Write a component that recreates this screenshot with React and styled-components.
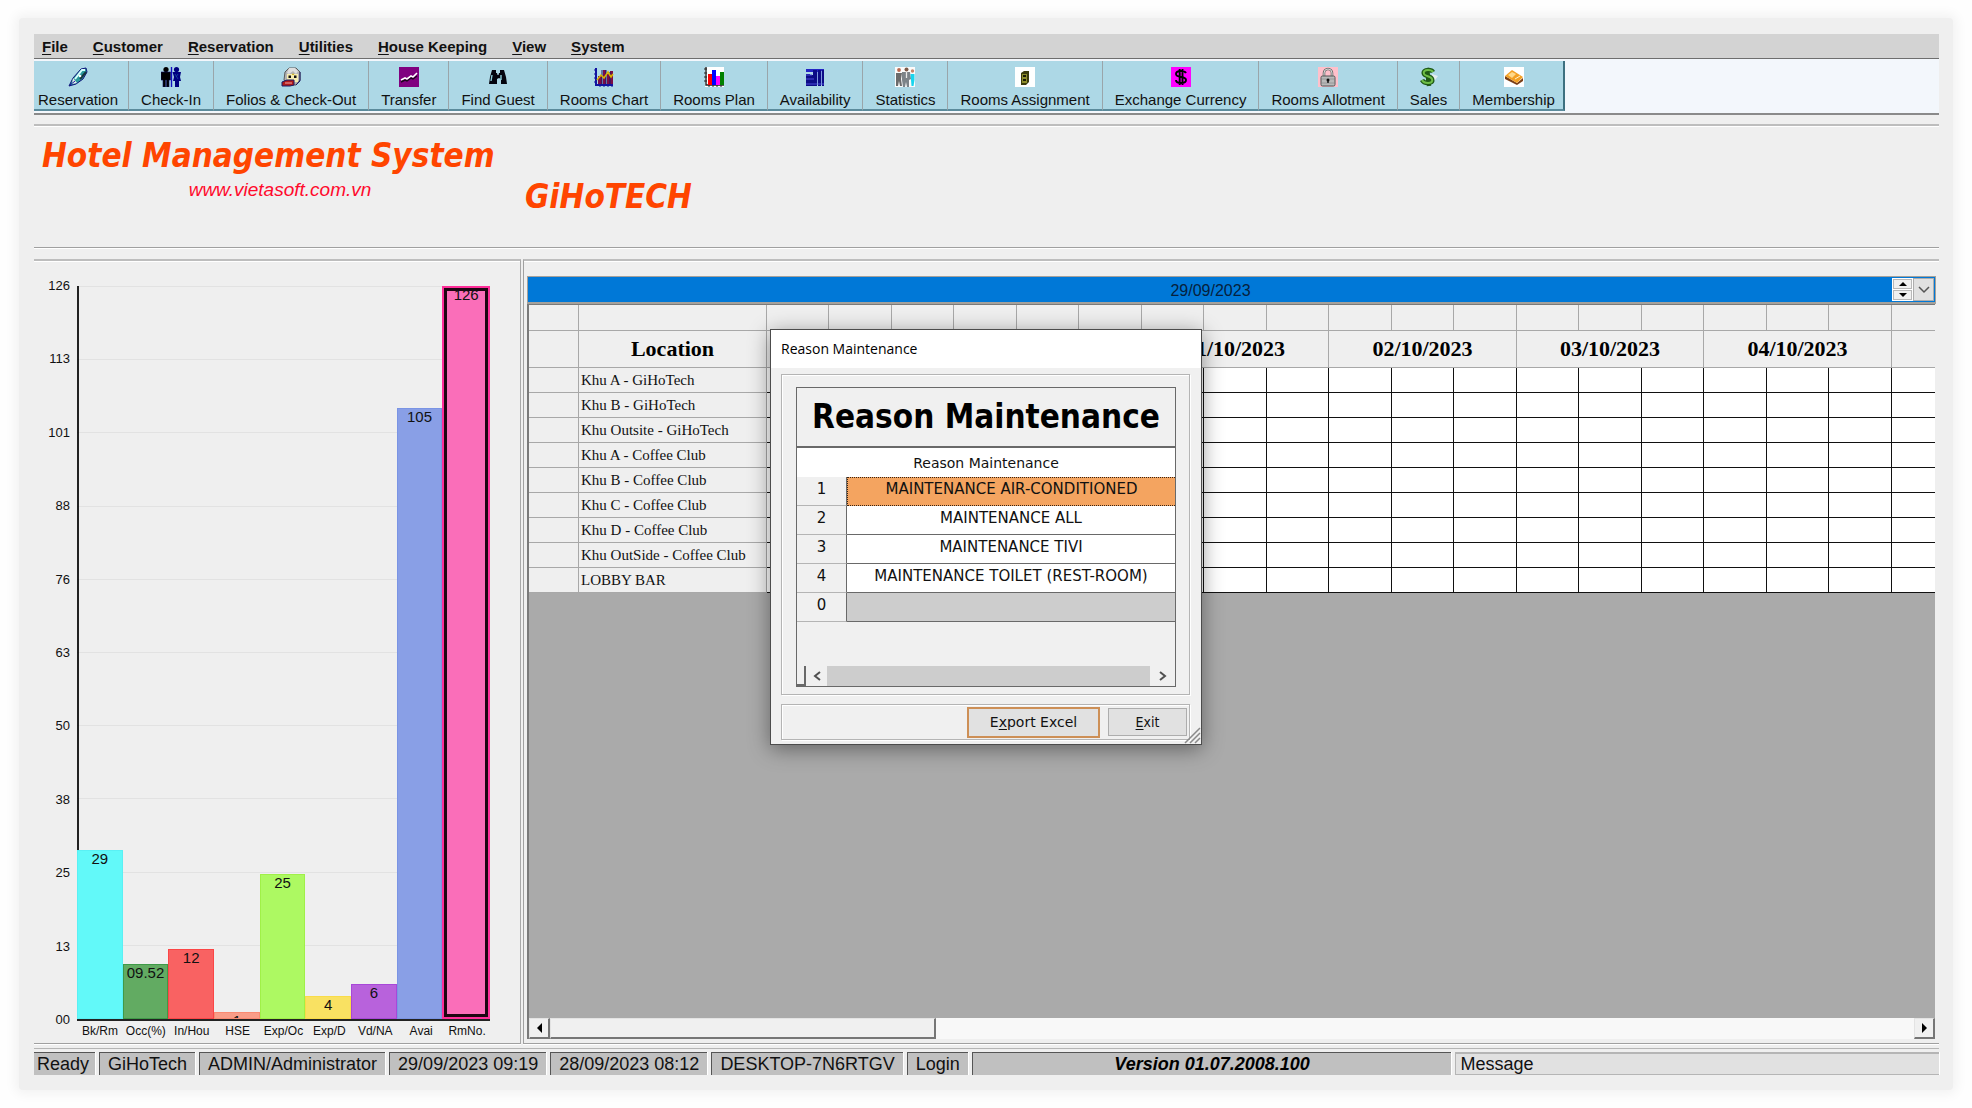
import React from "react";
import styled, { createGlobalStyle, css } from "styled-components";

const SANS = `"Liberation Sans", Arial, sans-serif`;
const SERIF = `"Liberation Serif", "Times New Roman", serif`;
const TAHOMA = `"DejaVu Sans Condensed", "DejaVu Sans", Tahoma, sans-serif`;
const WIDE = `"DejaVu Sans", Verdana, sans-serif`;

const GlobalStyle = createGlobalStyle`
  *, *::before, *::after { box-sizing: border-box; }
  body { margin: 0; background: #fefefe; font-family: ${SANS}; color: #111; }
  button, input { font: inherit; color: inherit; margin: 0; padding: 0; border: 0; border-radius: 0; }
  u { text-underline-offset: 2px; }
`;

const Page = styled.div`
  height: 100vh;
  min-height: 800px;
  padding: 18px 19px;
  display: flex;
`;

const Surface = styled.div`
  position: relative;
  flex: 1;
  min-width: 0;
  display: flex;
  flex-direction: column;
  padding: 16px 14px 15px 15px;
  background: #efefef;
  border-radius: 4px;
  box-shadow: 0 0 12px 4px rgba(0, 0, 0, 0.05);
`;

/* ---------- menu and toolbar ---------- */

const MenuBar = styled.nav`
  display: flex;
  gap: 25px;
  height: 25px;
  padding: 0 8px;
  background: #d3d3d3;
  border-bottom: 1px solid #6e6e6e;
`;

const MenuItem = styled.button`
  background: none;
  font-weight: bold;
  font-size: 15px;
  line-height: 26px;
`;

const ToolBar = styled.div`
  display: flex;
  height: 56px;
  padding: 2px 0;
  background: #f3f7fc;
  border-bottom: 2px solid #8a8a8a;
  flex-shrink: 0;
`;

const ToolButton = styled.button`
  display: flex;
  flex-direction: column;
  align-items: center;
  gap: 4px;
  padding: 6px 12px 0 12px;
  background: #add8e6;
  border-right: 1px solid #9aa5aa;
  border-bottom: 2px solid #5b8b9c;
  font-size: 15px;
  line-height: 17px;
  white-space: nowrap;
  &:first-child { padding-left: 4px; padding-right: 10px; }
  &:last-child { padding-right: 8px; border-right: 2px solid #3d7080; }
`;

const Glyph = styled.svg`
  width: 20px;
  height: 20px;
  display: block;
`;

/* ---------- banner ---------- */

const Banner = styled.header`
  display: flex;
  flex-shrink: 0;
  height: 124px;
  margin-top: 9px;
  padding-left: 8px;
  border-top: 2px solid #bdbdbd;
  border-bottom: 1px solid #a0a0a0;
  box-shadow: inset 0 1px 0 #fff, 0 1px 0 #fff;
`;

const brandFont = css`
  margin: 0;
  font-family: ${TAHOMA};
  font-weight: bold;
  font-style: italic;
  font-size: 33px;
  line-height: 40px;
  color: #ff4500;
`;

const BrandBlock = styled.div`
  display: flex;
  flex-direction: column;
  align-items: center;
  width: 476px;
  padding-top: 10px;
`;

const Brand = styled.h1`
  ${brandFont}
  align-self: flex-start;
  white-space: nowrap;
`;

const SiteLink = styled.a`
  font-size: 19px;
  line-height: 28px;
  font-style: italic;
  color: #ff0a2c;
  text-decoration: none;
`;

const HotelName = styled.h2`
  ${brandFont}
  padding: 51px 0 0 7px;
`;

/* ---------- work area ---------- */

const Workspace = styled.main`
  flex: 1;
  min-height: 0;
  display: flex;
  gap: 2px;
  margin-top: 11px;
`;

const panelEdge = css`
  border-top: 2px solid #bdbdbd;
  border-bottom: 1px solid #a0a0a0;
  box-shadow: inset 0 1px 0 #fff, 0 1px 0 #fff;
`;

const ChartPanel = styled.section`
  ${panelEdge}
  border-right: 1px solid #a8a8a8;
  width: 487px;
  flex-shrink: 0;
  display: flex;
  padding: 25px 30px 4px 9px;
`;

const YAxis = styled.div`
  display: flex;
  flex-direction: column;
  justify-content: space-between;
  width: 27px;
  margin: -8px 7px 11px 0;
  font-size: 13px;
  line-height: 16px;
  text-align: right;
`;

const ChartBody = styled.div`
  flex: 1;
  display: flex;
  flex-direction: column;
`;

const Plot = styled.div`
  position: relative;
  flex: 1;
  min-height: 0;
  display: flex;
  align-items: flex-end;
  border-bottom: 2px solid #222;
  box-shadow: inset 2px 0 0 #222;
`;

const GridLines = styled.div`
  position: absolute;
  inset: 0;
  display: flex;
  flex-direction: column;
  justify-content: space-between;
  span { height: 1px; background: rgba(0, 0, 0, 0.05); }
`;

const Bar = styled.div`
  position: relative;
  flex: 1;
  overflow: hidden;
  background: ${(p) => p.$fill};
  border: 1px solid ${(p) => p.$edge};
  font-size: 15px;
  line-height: 16px;
  text-align: center;
  white-space: nowrap;
  ${(p) =>
    p.$selected &&
    css`
      border-width: 2px;
      box-shadow: inset 0 0 0 3px #1d0612;
      line-height: 14px;
    `}
`;

const XAxis = styled.div`
  display: flex;
  padding-top: 3px;
  font-size: 12px;
  line-height: 15px;
  span { flex: 1 1 0; min-width: 0; text-align: center; white-space: nowrap; }
`;

const PlanPanel = styled.section`
  ${panelEdge}
  border-left: 1px solid #a0a0a0;
  flex: 1;
  min-width: 0;
  display: flex;
  flex-direction: column;
  padding: 15px 3px 4px 3px;
`;

const DateBar = styled.div`
  display: flex;
  height: 28px;
  padding: 1px;
  background: #0078d7;
  border: 1px solid #a5a19b;
  border-bottom-width: 2px;
  flex-shrink: 0;
`;

const DateField = styled.input`
  flex: 1;
  min-width: 0;
  padding-top: 2px;
  background: transparent;
  text-align: center;
  font-size: 16px;
  color: #06213d;
`;

const Spinner = styled.div`
  display: flex;
  flex-direction: column;
  gap: 1px;
  width: 21px;
  padding: 1px;
  background: #fff;
`;

const SpinButton = styled.button`
  flex: 1;
  display: grid;
  place-items: center;
  background: #f0f0f0;
  border: 1px solid #b8b8b8;
  svg { display: block; }
`;

const DropButton = styled.button`
  width: 21px;
  display: grid;
  place-items: center;
  background: #e1e1e1;
  border: 1px solid #adadad;
`;

const GridFrame = styled.div`
  flex: 1;
  min-height: 0;
  display: flex;
  flex-direction: column;
  margin-right: 1px;
  border-left: 2px solid #7a7a7a;
  border-top: 1px solid #7a7a7a;
`;

const GridView = styled.div`
  flex: 1;
  min-height: 0;
  overflow: hidden;
  background: #aaa;
`;

const PlanTable = styled.table`
  table-layout: fixed;
  width: 1550px;
  border-spacing: 0;
  font-family: ${SERIF};
  td, th { padding: 0; border-right: 1px solid #a8a8a8; border-bottom: 1px solid #a8a8a8; background: #efefef; }
`;

const SlotRow = styled.tr`
  height: 26px;
`;

const DayRow = styled.tr`
  height: 37px;
  th { font-size: 22px; line-height: 24px; font-weight: bold; color: #000; }
`;

const RoomRow = styled.tr`
  height: 25px;
  th { padding-left: 2px; text-align: left; font-weight: normal; font-size: 15px; line-height: 20px; white-space: nowrap; }
  td.slot { background: #fff; border-color: #111; }
`;

const HScroll = styled.div`
  display: flex;
  height: ${(p) => (p.$flat ? 20 : 21)}px;
  flex-shrink: 0;
  background: #f8f8f8;
`;

const raised = css`
  background: #f0f0f0;
  border: 1px solid #e3e3e3;
  border-right: 2px solid #767676;
  border-bottom: 2px solid #767676;
`;

const RaisedArrow = styled.button`
  ${raised}
  width: 21px;
  display: grid;
  place-items: center;
`;

const RaisedThumb = styled.div`
  ${raised}
  width: 386px;
  margin-right: auto;
`;

/* ---------- status bar ---------- */

const StatusBar = styled.footer`
  display: flex;
  gap: 4px;
  flex-shrink: 0;
  height: 27px;
  margin-top: 4px;
  padding-top: 3px;
  border-top: 1px solid #b5b5b5;
  font-size: 18px;
  line-height: 22px;
  white-space: nowrap;
`;

const StatusCell = styled.span`
  padding: 0 8px;
  background: #c0c0c0;
  border-top: 1px solid #555;
  border-left: 1px solid #555;
  box-shadow: 1px 0 0 #fff;
  &:first-child { padding: 0 6px 0 3px; border-left: 0; }
`;

const VersionCell = styled(StatusCell)`
  flex: 1 1 0;
  padding: 0;
  text-align: center;
  font-weight: bold;
  font-style: italic;
  color: #000;
`;

const MessageCell = styled(StatusCell)`
  flex: 1 1 0;
  padding: 0 0 0 4px;
  background: #e1e1e1;
  border: 1px solid #b5b5b5;
  border-top: 2px solid #b5b5b5;
  border-right: 0;
  line-height: 20px;
`;

/* ---------- dialog ---------- */

const Dialog = styled.div`
  position: absolute;
  top: 311px;
  left: calc(50% - 216px);
  width: 432px;
  display: flex;
  flex-direction: column;
  background: #f0f0f0;
  border: 1px solid #4c4c4c;
  box-shadow: 0 4px 20px rgba(0, 0, 0, 0.42);
  font-family: ${WIDE};
`;

const DialogTitle = styled.div`
  height: 38px;
  padding-left: 10px;
  background: #fff;
  font-family: "Open Sans", "Noto Sans", sans-serif;
  font-size: 14px;
  line-height: 37px;
  color: #000;
`;

const GroupBox = styled.div`
  margin: 6px 11px 0 10px;
  padding: 12px 13px 7px 14px;
  border: 1px solid #b4b4b4;
  box-shadow: inset 1px 1px 0 #fff, 1px 1px 0 #fff;
`;

const ListFrame = styled.div`
  display: flex;
  flex-direction: column;
  height: 300px;
  border: 1px solid #696969;
`;

const ListHeading = styled.h3`
  margin: 0;
  height: 60px;
  border-bottom: 2px solid #696969;
  font-family: ${TAHOMA};
  font-size: 33px;
  line-height: 58px;
  text-align: center;
  white-space: nowrap;
  color: #000;
`;

const ReasonTable = styled.table`
  table-layout: fixed;
  width: 100%;
  border-spacing: 0;
  font-size: 15px;
  line-height: 18px;
  text-align: center;
  tr { height: 29px; }
  th, td { padding: 0 0 5px; font-weight: normal; white-space: nowrap; }
  thead th { background: #fff; font-size: 14px; padding: 0; }
  tbody th { background: #f0f0f0; border-bottom: 1px solid #b4b4b4; border-right: 1px solid #696969; }
  tbody td { background: #fff; border-bottom: 1px solid #696969; }
  tbody tr.selected td { background: #f4a460; border: 1px dotted #3a2413; border-right: 0; }
  tbody tr.blank td { background: #cdcdcd; }
`;

const FlatScroll = styled(HScroll)`
  margin-top: auto;
  background: #f0f0f0;
`;

const SplitGrip = styled.div`
  width: 9px;
  border-right: 2px solid #696969;
  border-bottom: 2px solid #696969;
`;

const FlatArrow = styled.button`
  width: 21px;
  display: grid;
  place-items: center;
  background: #f0f0f0;
  &:last-child { width: 25px; }
`;

const FlatThumb = styled.div`
  flex: 1;
  background: #cdcdcd;
`;

const DialogFooter = styled.div`
  position: relative;
  display: flex;
  justify-content: flex-end;
  align-items: center;
  gap: 8px;
  height: 36px;
  margin: 9px 11px 4px 10px;
  padding-right: 2px;
  border: 1px solid #b4b4b4;
  box-shadow: inset 1px 1px 0 #fff, 1px 1px 0 #fff;
`;

const DialogButton = styled.button`
  width: ${(p) => (p.$main ? 133 : 79)}px;
  height: ${(p) => (p.$main ? 31 : 28)}px;
  background: #e1e1e1;
  border: ${(p) => (p.$main ? "2px solid #cd8f56" : "1px solid #adadad")};
  font-family: ${(p) => (p.$main ? WIDE : TAHOMA)};
  font-size: 14px;
`;

const SizeGrip = styled.svg`
  position: absolute;
  right: 0;
  bottom: 0;
`;

/* ---------- icons ---------- */

const icons = {
  pen: (
    <>
      <path d="M1 19 L5 11 L13 2 L18 1 L19 5 L15 12 L8 17 Z" fill="#2a9a9c" stroke="#10107a" />
      <path d="M7 12 L14 3 L17 3" stroke="#d7ffff" strokeWidth="2" fill="none" />
      <path d="M12 12 L18 5" stroke="#16343c" strokeWidth="2" />
      <path d="M5 11 L9 16 L4 17 Z" fill="#e9ecec" />
      <path d="M2 18 L7 14" stroke="#1818a0" />
      <circle cx="12" cy="9" r="1.3" fill="#fff" />
    </>
  ),
  people: (
    <>
      <circle cx="5" cy="2.6" r="2.6" fill="#000" />
      <path d="M0 5h9.500v8H8v7H5.500v-7h-1v7H2v-7H0z" fill="#000" stroke="#0a0a5a" strokeWidth=".6" />
      <path d="M10.5 0v20" stroke="#1010c0" strokeWidth="1.400" />
      <circle cx="15.5" cy="2.6" r="2.6" fill="#000080" />
      <path d="M11.500 5H20l-1 5 1 4h-2v6h-4v-6h-2l1-4z" fill="#000080" />
      <path d="M14 7l3 5M17 7l-2 3" stroke="#1a4aa0" strokeWidth=".8" />
    </>
  ),
  face: (
    <>
      <path d="M4 5 L8 1 H15 L19 5 V13 L15 18 H7 L3 13 Z" fill="#b4b4b4" stroke="#5a5a5a" />
      <path d="M8 1h6l3 3-2 3-3-3-4 3-2-1z" fill="#dedede" />
      <path d="M6 7h11v8H6z" fill="#f7edb0" />
      <path d="M7.500 8.500h2.500v2.500H7.500zM13 8.500h2.500v2.500H13z" fill="#111" />
      <path d="M11 8l1-2 1 2z" fill="#c7a400" />
      <path d="M1 15 L6 13 H13 V18 L9 19 H1 Z" fill="#b01a1a" stroke="#1a1a66" />
      <path d="M4 16h7" stroke="#f3a6a6" />
      <path d="M19 5v9l-4 4" stroke="#1a1a66" fill="none" />
    </>
  ),
  transfer: (
    <>
      <path d="M0 0h20v20H0z" fill="#800080" />
      <path d="M2 13l4-2 2 1 4-3 2 1 4-4" stroke="#fff" strokeWidth="1.600" fill="none" />
      <path d="M2 15l4-2 2 1 4-3 2 1 4-3" stroke="#1c041c" strokeWidth="1.400" fill="none" />
    </>
  ),
  binoculars: (
    <>
      <path d="M4 3h4v3h1l1 2 1-2h1V3h4l2 7 1 7h-6v-5l-2-1-2 1v5H1l1-7z" fill="#05050f" />
      <path d="M4 8l-1 6M13 8v5" stroke="#8fd0dd" strokeWidth="1.400" />
      <path d="M9 7h2" stroke="#add8e6" />
    </>
  ),
  roomsChart: (
    <>
      <path d="M2 1v17h17" stroke="#1212a0" strokeWidth="2" fill="none" />
      <path d="M0 3h3M0 7h3M0 11h3M0 15h3M6 17v3M10 17v3M14 17v3M18 17v3" stroke="#1212a0" />
      <path d="M4 9h4v8H4zM9 3h3v14H9zM13 7h3v10h-3zM16 4h3v13h-3z" fill="#7b0c46" />
      <path d="M8 3v14M12 3v14M16 5v12" stroke="#14146c" />
      <path d="M3 13l4-5 3 3 4-6 3 5 2-3" stroke="#d9b400" strokeWidth="1.500" fill="none" />
    </>
  ),
  roomsPlan: (
    <>
      <path d="M1 0h19v20H1z" fill="#fff" />
      <path d="M2 0v18h18" stroke="#222" strokeWidth="1.400" fill="none" />
      <path d="M0 2h3M0 6h3M0 10h3M0 14h3M5 17v3M9 17v3M13 17v3M17 17v3" stroke="#222" />
      <path d="M4 7h4v11H4z" fill="#f00" />
      <path d="M8 3h4v15H8z" fill="#00f" />
      <path d="M12 9h4v9h-4z" fill="#f0f" />
      <path d="M16 5h4v13h-4z" fill="#008000" />
    </>
  ),
  availability: (
    <>
      <path d="M1 2h18v3H1z" fill="#2424c4" />
      <path d="M1 7h4v12H1zM5 8h3v11H5zM8 3h4v16H8zM13 3h3v16h-3zM17 3h2v16h-2z" fill="#0c0c86" />
      <path d="M1 8h6M1 12h8M1 17h18" stroke="#4a4ad8" />
      <path d="M12.500 5v12M16.500 4v12" stroke="#7f9be0" />
    </>
  ),
  statistics: (
    <>
      <path d="M0 0h20v20H0z" fill="#fbfbfb" />
      <circle cx="4" cy="3" r="1.900" fill="#b9694f" />
      <path d="M1 6h6l-1 6 1 7H5l-1-5-1 5H1z" fill="#6b6b6b" />
      <circle cx="11.5" cy="2.4" r="2" fill="#7d5a48" />
      <path d="M7 5h8l1 7-2 1v7h-2l-1-5-1 5H8l-1-7z" fill="#7c8388" />
      <path d="M11.500 5v6" stroke="#e9e9e9" strokeWidth="1.300" />
      <circle cx="17.5" cy="4" r="1.700" fill="#c7866a" />
      <path d="M15.500 7h4v6l-1 6h-2z" fill="#19d5ee" />
    </>
  ),
  assignment: (
    <>
      <path d="M0 0h20v20H0z" fill="#fff" />
      <path d="M6 6l3-2h5v11l-3 3H6z" fill="#3b3b0c" />
      <path d="M7 7h5v9H7z" fill="#8d8d2b" />
      <path d="M8 8h3v2H8zM8 12h3v2H8z" fill="#1a1a05" />
    </>
  ),
  currency: (
    <>
      <path d="M0 0h20v20H0z" fill="#f0f" />
      <path
        d="M15 6C14 4 12 4 10 4 7 4 5 5 5 7s2 2.500 5 3 5 1 5 3-2 3-5 3-5-1-5-3M8.700 2v16M11.500 2v16"
        stroke="#000"
        strokeWidth="1.900"
        fill="none"
      />
    </>
  ),
  lock: (
    <>
      <path d="M0 0h20v20H0z" fill="#ffc0cb" />
      <path d="M6 10V6a4 4 0 0 1 8 0v4" stroke="#6f6f6f" strokeWidth="2.600" fill="none" />
      <path d="M6 10V6a4 4 0 0 1 8 0v4" stroke="#d5d5d5" strokeWidth="1" fill="none" />
      <rect x="3" y="9" width="14" height="10" rx="1.500" fill="#b9b9b9" stroke="#555" />
      <path d="M4 12h12M4 16h12" stroke="#989898" />
      <circle cx="10" cy="13" r="1.500" fill="#111" />
      <path d="M10 13v3" stroke="#111" strokeWidth="1.400" />
    </>
  ),
  sales: (
    <>
      <path d="M13 7l6 2-3 4-6 2z" fill="#e4edf0" />
      <path
        d="M14 5C13 3 11 3 9 3 6 3 4 4.500 5 7s7 2 8 5-1 4-4 4-5-1-6-3M8 1l2 18"
        stroke="#1f5a16"
        strokeWidth="4.500"
        fill="none"
      />
      <path
        d="M14 5C13 3 11 3 9 3 6 3 4 4.500 5 7s7 2 8 5-1 4-4 4-5-1-6-3"
        stroke="#6fbf48"
        strokeWidth="2"
        fill="none"
      />
    </>
  ),
  membership: (
    <>
      <path d="M0 0h20v20H0z" fill="#fff" />
      <path d="M1 9l12 7 6-5v3l-6 4-12-6z" fill="#7a3f16" />
      <path d="M1 9l7-6 11 7-6 6z" fill="#f3a024" />
      <path d="M4 8l4-3 4 2-4 4z" fill="#ffd98a" />
      <path d="M11 12l5-3" stroke="#fff3cf" />
    </>
  ),
};

/* ---------- data ---------- */

const menus = ["File", "Customer", "Reservation", "Utilities", "House Keeping", "View", "System"];

const tools = [
  ["Reservation", "pen"],
  ["Check-In", "people"],
  ["Folios & Check-Out", "face"],
  ["Transfer", "transfer"],
  ["Find Guest", "binoculars"],
  ["Rooms Chart", "roomsChart"],
  ["Rooms Plan", "roomsPlan"],
  ["Availability", "availability"],
  ["Statistics", "statistics"],
  ["Rooms Assignment", "assignment"],
  ["Exchange Currency", "currency"],
  ["Rooms Allotment", "lock"],
  ["Sales", "sales"],
  ["Membership", "membership"],
];

const ticks = ["126", "113", "101", "88", "76", "63", "50", "38", "25", "13", "00"];

const bars = [
  { name: "Bk/Rm", value: 29, text: "29", fill: "#62f9f9", edge: "#5af0f4" },
  { name: "Occ(%)", value: 9.52, text: "09.52", fill: "#62ab62", edge: "#3f9a48" },
  { name: "In/Hou", value: 12, text: "12", fill: "#f96262", edge: "#fb4646" },
  { name: "HSE", value: 1.2, text: "1", fill: "#f99d88", edge: "#f98a72" },
  { name: "Exp/Oc", value: 25, text: "25", fill: "#adf962", edge: "#a0f048" },
  { name: "Exp/D", value: 4, text: "4", fill: "#f9e162", edge: "#f9dc48" },
  { name: "Vd/NA", value: 6, text: "6", fill: "#b862dc", edge: "#a848d8" },
  { name: "Avai", value: 105, text: "105", fill: "#899fe6", edge: "#7a94e4" },
  { name: "RmNo.", value: 126, text: "126", fill: "#fa6eb9", edge: "#ff2f9a", selected: true },
];

const days = ["29/09/2023", "30/09/2023", "01/10/2023", "02/10/2023", "03/10/2023", "04/10/2023", "05/10/2023"];
const slots = Array.from({ length: days.length * 3 }, (_, i) => i);

const locations = [
  "Khu A - GiHoTech",
  "Khu B - GiHoTech",
  "Khu Outsite - GiHoTech",
  "Khu A - Coffee Club",
  "Khu B - Coffee Club",
  "Khu C - Coffee Club",
  "Khu D - Coffee Club",
  "Khu OutSide - Coffee Club",
  "LOBBY BAR",
];

const reasons = [
  ["1", "MAINTENANCE AIR-CONDITIONED", "selected"],
  ["2", "MAINTENANCE ALL", ""],
  ["3", "MAINTENANCE TIVI", ""],
  ["4", "MAINTENANCE TOILET (REST-ROOM)", ""],
  ["0", "", "blank"],
];

const status = [
  "Ready",
  "GiHoTech",
  "ADMIN/Administrator",
  "29/09/2023 09:19",
  "28/09/2023 08:12",
  "DESKTOP-7N6RTGV",
  "Login",
];

/* ---------- components ---------- */

function OccupancyChart() {
  return (
    <ChartPanel aria-label="Occupancy">
      <YAxis>
        {ticks.map((t) => (
          <span key={t}>{t}</span>
        ))}
      </YAxis>
      <ChartBody>
        <Plot>
          <GridLines>
            {ticks.map((t) => (
              <span key={t} />
            ))}
          </GridLines>
          {bars.map((b) => (
            <Bar
              key={b.name}
              $fill={b.fill}
              $edge={b.edge}
              $selected={b.selected}
              style={{ height: `${(b.value / 126) * 100}%` }}
            >
              {b.text}
            </Bar>
          ))}
        </Plot>
        <XAxis>
          {bars.map((b) => (
            <span key={b.name}>{b.name}</span>
          ))}
        </XAxis>
      </ChartBody>
    </ChartPanel>
  );
}

function RoomPlan() {
  return (
    <PlanPanel aria-label="Room plan">
      <DateBar>
        <DateField aria-label="Plan date" defaultValue="29/09/2023" />
        <Spinner>
          <SpinButton aria-label="Next day">
            <svg width="8" height="4"><path d="M0 4L4 0L8 4z" /></svg>
          </SpinButton>
          <SpinButton aria-label="Previous day">
            <svg width="8" height="4"><path d="M0 0L4 4L8 0z" /></svg>
          </SpinButton>
        </Spinner>
        <DropButton aria-label="Open calendar">
          <svg width="12" height="8"><path d="M1 1L6 6L11 1" stroke="#555" strokeWidth="1.500" fill="none" /></svg>
        </DropButton>
      </DateBar>
      <GridFrame>
        <GridView>
          <PlanTable>
            <colgroup>
              <col style={{ width: 50 }} />
              <col style={{ width: 188 }} />
              {slots.map((s) => (
                <col key={s} style={{ width: s % 2 ? 63 : 62 }} />
              ))}
            </colgroup>
            <thead>
              <SlotRow>
                <td />
                <td />
                {slots.map((s) => (
                  <td key={s} />
                ))}
              </SlotRow>
              <DayRow>
                <td />
                <th scope="col">Location</th>
                {days.map((d) => (
                  <th key={d} scope="col" colSpan={3}>{d}</th>
                ))}
              </DayRow>
            </thead>
            <tbody>
              {locations.map((l) => (
                <RoomRow key={l}>
                  <td />
                  <th scope="row">{l}</th>
                  {slots.map((s) => (
                    <td key={s} className="slot" />
                  ))}
                </RoomRow>
              ))}
            </tbody>
          </PlanTable>
        </GridView>
        <HScroll>
          <RaisedArrow aria-label="Scroll left">
            <svg width="5" height="10"><path d="M5 0L0 5L5 10z" /></svg>
          </RaisedArrow>
          <RaisedThumb />
          <RaisedArrow aria-label="Scroll right">
            <svg width="5" height="10"><path d="M0 0L5 5L0 10z" /></svg>
          </RaisedArrow>
        </HScroll>
      </GridFrame>
    </PlanPanel>
  );
}

function ReasonDialog() {
  return (
    <Dialog role="dialog" aria-labelledby="reason-title">
      <DialogTitle id="reason-title">Reason Maintenance</DialogTitle>
      <GroupBox>
        <ListFrame>
          <ListHeading>Reason Maintenance</ListHeading>
          <ReasonTable>
            <colgroup>
              <col style={{ width: 50 }} />
              <col />
            </colgroup>
            <thead>
              <tr>
                <th colSpan={2}>Reason Maintenance</th>
              </tr>
            </thead>
            <tbody>
              {reasons.map(([n, text, state]) => (
                <tr key={n} className={state}>
                  <th scope="row">{n}</th>
                  <td>{text}</td>
                </tr>
              ))}
            </tbody>
          </ReasonTable>
          <FlatScroll $flat>
            <SplitGrip />
            <FlatArrow aria-label="Scroll left">
              <svg width="8" height="10"><path d="M7 1L2 5L7 9" stroke="#505050" strokeWidth="2" fill="none" /></svg>
            </FlatArrow>
            <FlatThumb />
            <FlatArrow aria-label="Scroll right">
              <svg width="8" height="10"><path d="M1 1L6 5L1 9" stroke="#505050" strokeWidth="2" fill="none" /></svg>
            </FlatArrow>
          </FlatScroll>
        </ListFrame>
      </GroupBox>
      <DialogFooter>
        <DialogButton $main>E<u>x</u>port Excel</DialogButton>
        <DialogButton><u>E</u>xit</DialogButton>
      </DialogFooter>
      <SizeGrip width="17" height="17">
        <path d="M1 16L16 1M6 16L16 6M11 16L16 11" stroke="#8a8a8a" strokeWidth="1.500" />
      </SizeGrip>
    </Dialog>
  );
}

export default function App() {
  return (
    <Page>
      <GlobalStyle />
      <Surface>
        <MenuBar>
          {menus.map((m) => (
            <MenuItem key={m}>
              <u>{m[0]}</u>
              {m.slice(1)}
            </MenuItem>
          ))}
        </MenuBar>
        <ToolBar>
          {tools.map(([label, icon]) => (
            <ToolButton key={label}>
              <Glyph viewBox="0 0 20 20" fill="none" aria-hidden="true">{icons[icon]}</Glyph>
              {label}
            </ToolButton>
          ))}
        </ToolBar>
        <Banner>
          <BrandBlock>
            <Brand>Hotel Management System</Brand>
            <SiteLink href="#site">www.vietasoft.com.vn</SiteLink>
          </BrandBlock>
          <HotelName>GiHoTECH</HotelName>
        </Banner>
        <Workspace>
          <OccupancyChart />
          <RoomPlan />
        </Workspace>
        <StatusBar>
          {status.map((s) => (
            <StatusCell key={s}>{s}</StatusCell>
          ))}
          <VersionCell>Version 01.07.2008.100</VersionCell>
          <MessageCell>Message</MessageCell>
        </StatusBar>
        <ReasonDialog />
      </Surface>
    </Page>
  );
}
